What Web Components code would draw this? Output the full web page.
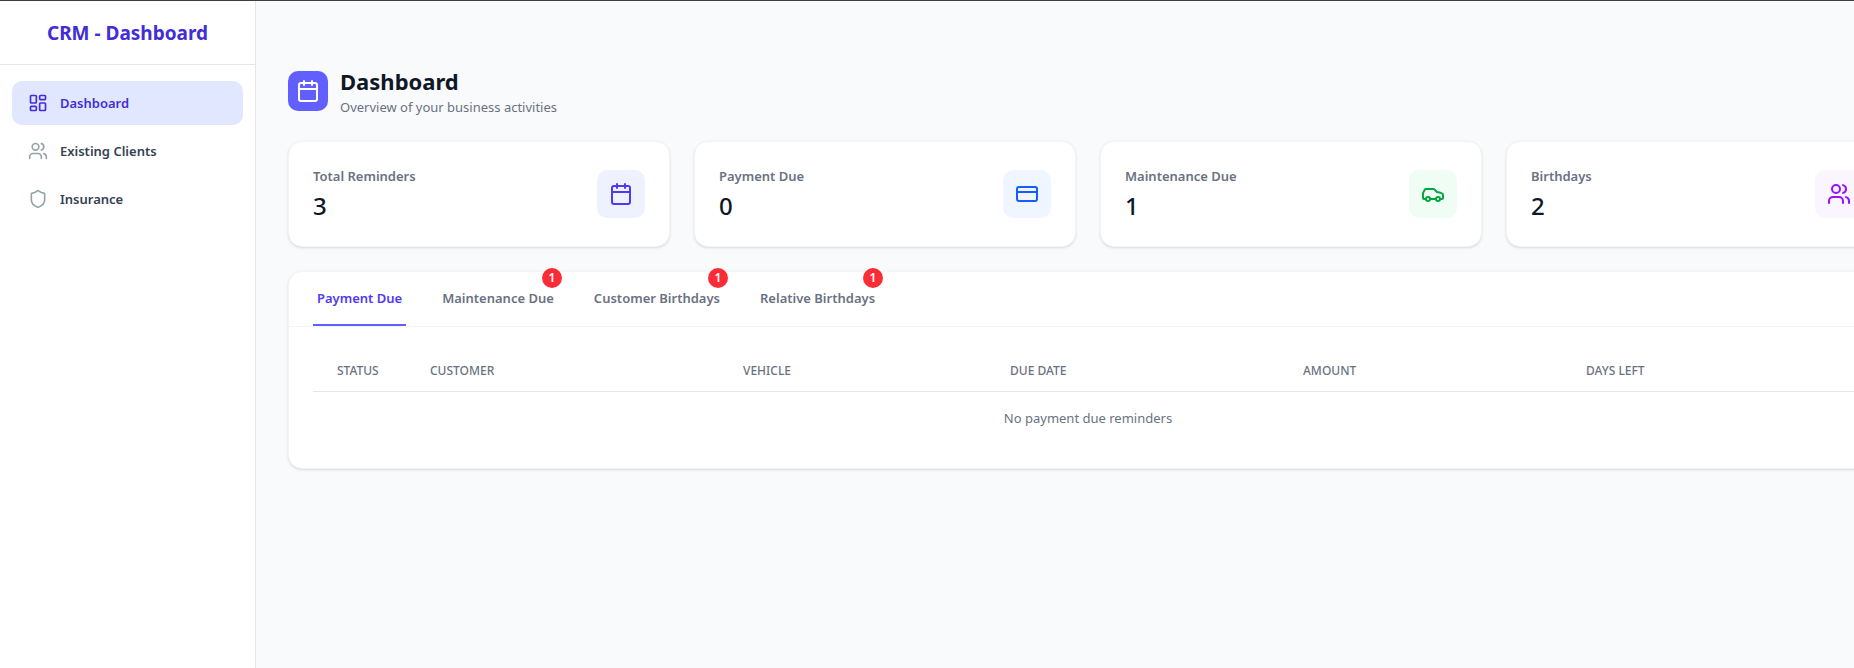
<!DOCTYPE html>
<html lang="en">
<head>
<meta charset="utf-8">
<meta name="viewport" content="width=device-width, initial-scale=1">
<title>CRM - Dashboard</title>
<style>
  body {
    margin: 0;
    font-family: "Noto Sans", "Open Sans", sans-serif;
    font-size: 13px;
    line-height: 20px;
    color: #101828;
    background: #f9fafb;
  }
</style>
</head>
<body>
<crm-app>
  <crm-sidebar slot="sidebar" heading="CRM - Dashboard">
    <crm-nav-item icon="dashboard" active>Dashboard</crm-nav-item>
    <crm-nav-item icon="users">Existing Clients</crm-nav-item>
    <crm-nav-item icon="shield">Insurance</crm-nav-item>
  </crm-sidebar>

  <crm-page-header icon="calendar" heading="Dashboard">Overview of your business activities</crm-page-header>

  <crm-stats>
    <crm-stat-card icon="calendar" value="3" color="indigo">Total Reminders</crm-stat-card>
    <crm-stat-card icon="card" value="0" color="blue">Payment Due</crm-stat-card>
    <crm-stat-card icon="car" value="1" color="green">Maintenance Due</crm-stat-card>
    <crm-stat-card icon="users" value="2" color="purple">Birthdays</crm-stat-card>
  </crm-stats>

  <crm-panel>
    <crm-tab slot="tabs" active>Payment Due</crm-tab>
    <crm-tab slot="tabs" count="1">Maintenance Due</crm-tab>
    <crm-tab slot="tabs" count="1">Customer Birthdays</crm-tab>
    <crm-tab slot="tabs" count="1">Relative Birthdays</crm-tab>
    <crm-reminders empty="No payment due reminders"></crm-reminders>
  </crm-panel>
</crm-app>

<script>
const ICONS = {
  dashboard: `
    <rect x="3" y="3" width="7" height="9" rx="1"/>
    <rect x="14" y="3" width="7" height="5" rx="1"/>
    <rect x="14" y="12" width="7" height="9" rx="1"/>
    <rect x="3" y="16" width="7" height="5" rx="1"/>`,
  users: `
    <path d="M16 21v-2a4 4 0 0 0-4-4H6a4 4 0 0 0-4 4v2"/>
    <circle cx="9" cy="7" r="4"/>
    <path d="M22 21v-2a4 4 0 0 0-3-3.87"/>
    <path d="M16 3.13a4 4 0 0 1 0 7.75"/>`,
  shield: `
    <path d="M20 13c0 5-3.5 7.5-7.66 8.95a1 1 0 0 1-.67-.01C7.5 20.5 4 18 4 13V6a1 1 0 0 1 1-1c2 0 4.5-1.2 6.24-2.72a1.17 1.17 0 0 1 1.52 0C14.51 3.81 17 5 19 5a1 1 0 0 1 1 1z"/>`,
  calendar: `
    <path d="M8 2v4"/>
    <path d="M16 2v4"/>
    <rect x="3" y="4" width="18" height="18" rx="2"/>
    <path d="M3 10h18"/>`,
  card: `
    <rect x="2" y="5" width="20" height="14" rx="2"/>
    <path d="M2 10h20"/>`,
  car: `
    <path d="M19 17h2c.6 0 1-.4 1-1v-3c0-.9-.7-1.7-1.5-1.9C18.7 10.6 16 10 16 10s-1.3-1.4-2.2-2.3c-.5-.4-1.1-.7-1.8-.7H5c-.6 0-1.1.4-1.4.9l-1.4 2.9A3.7 3.7 0 0 0 2 12v4c0 .6.4 1 1 1h2"/>
    <circle cx="7" cy="17" r="2"/>
    <path d="M9 17h6"/>
    <circle cx="17" cy="17" r="2"/>`,
};

const COLORS = {
  indigo: ['#4f39f6', '#eef2ff'],
  blue: ['#155dfc', '#eff6ff'],
  green: ['#00a63e', '#f0fdf4'],
  purple: ['#9810fa', '#faf5ff'],
};

function render(element, html) {
  const shadow = element.attachShadow({ mode: 'open' });
  const template = document.createElement('template');
  template.innerHTML = html;
  shadow.appendChild(template.content.cloneNode(true));
}

class Icon extends HTMLElement {
  constructor() {
    super();
    render(this, `
      <style>
        :host {
          display: block;
          flex: none;
          width: 24px;
          height: 24px;
        }
        svg {
          display: block;
          width: 100%;
          height: 100%;
          fill: none;
          stroke: currentColor;
          stroke-width: 2;
          stroke-linecap: round;
          stroke-linejoin: round;
        }
      </style>
      <svg viewBox="0 0 24 24" aria-hidden="true">${ICONS[this.getAttribute('name')]}</svg>
    `);
  }
}

class App extends HTMLElement {
  constructor() {
    super();
    render(this, `
      <style>
        :host {
          display: flex;
          box-sizing: border-box;
          min-height: 100vh;
          border-top: 1px solid #3f3d45;
        }
        main {
          flex: 1;
          min-width: 0;
          box-sizing: border-box;
          padding: 64px 32px 32px;
          overflow: hidden;
        }
        /* four cards stay in one row, the rest runs off to the right */
        .content {
          display: flex;
          flex-direction: column;
          gap: 24px;
          min-width: 1600px;
        }
      </style>
      <slot name="sidebar"></slot>
      <main>
        <div class="content"><slot></slot></div>
      </main>
    `);
  }
}

class Sidebar extends HTMLElement {
  constructor() {
    super();
    render(this, `
      <style>
        :host {
          display: block;
          flex: none;
          box-sizing: border-box;
          width: 256px;
          background: #fff;
          border-right: 1px solid #e5e7eb;
        }
        header {
          display: flex;
          align-items: center;
          justify-content: center;
          box-sizing: border-box;
          height: 64px;
          border-bottom: 1px solid #e5e7eb;
        }
        h1 {
          margin: 0;
          font-size: 19px;
          font-weight: 700;
          line-height: 28px;
          color: #432dd7;
        }
        nav {
          display: flex;
          flex-direction: column;
          gap: 4px;
          padding: 16px 12px;
        }
      </style>
      <header><h1>${this.getAttribute('heading')}</h1></header>
      <nav><slot></slot></nav>
    `);
  }
}

class NavItem extends HTMLElement {
  constructor() {
    super();
    render(this, `
      <style>
        :host { display: block; }
        a {
          display: flex;
          align-items: center;
          gap: 12px;
          padding: 12px 16px;
          border-radius: 10px;
          color: #364153;
          font-weight: 600;
          text-decoration: none;
        }
        crm-icon {
          width: 20px;
          height: 20px;
          color: #95a5a6;
        }
        :host([active]) a { background: #e0e7ff; }
        :host([active]) a,
        :host([active]) crm-icon { color: #432dd7; }
      </style>
      <a href="#"><crm-icon name="${this.getAttribute('icon')}"></crm-icon><slot></slot></a>
    `);
  }
}

class PageHeader extends HTMLElement {
  constructor() {
    super();
    render(this, `
      <style>
        :host {
          display: flex;
          align-items: center;
          gap: 12px;
        }
        .badge {
          padding: 8px;
          border-radius: 10px;
          color: #fff;
          background: #615fff;
        }
        h2 {
          margin: 0;
          font-size: 22px;
          font-weight: 700;
          line-height: 32px;
        }
        p {
          margin: 0;
          color: #6a7282;
        }
      </style>
      <div class="badge"><crm-icon name="${this.getAttribute('icon')}"></crm-icon></div>
      <div>
        <h2>${this.getAttribute('heading')}</h2>
        <p><slot></slot></p>
      </div>
    `);
  }
}

class Stats extends HTMLElement {
  constructor() {
    super();
    render(this, `
      <style>
        :host {
          display: grid;
          grid-template-columns: repeat(4, 1fr);
          gap: 24px;
        }
      </style>
      <slot></slot>
    `);
  }
}

class StatCard extends HTMLElement {
  constructor() {
    super();
    const [color, background] = COLORS[this.getAttribute('color')];
    render(this, `
      <style>
        :host {
          display: flex;
          align-items: center;
          justify-content: space-between;
          padding: 24px;
          background: #fff;
          border: 1px solid #f3f4f6;
          border-radius: 14px;
          box-shadow: 0 1px 3px rgba(0, 0, 0, .1), 0 1px 2px -1px rgba(0, 0, 0, .1);
        }
        p { margin: 0; }
        .label {
          margin-bottom: 4px;
          font-weight: 600;
          color: #6a7282;
        }
        .value {
          font-size: 24px;
          font-weight: 500;
          line-height: 32px;
        }
        .icon {
          padding: 12px;
          border-radius: 10px;
          color: ${color};
          background: ${background};
        }
      </style>
      <div>
        <p class="label"><slot></slot></p>
        <p class="value">${this.getAttribute('value')}</p>
      </div>
      <div class="icon"><crm-icon name="${this.getAttribute('icon')}"></crm-icon></div>
    `);
  }
}

class Panel extends HTMLElement {
  constructor() {
    super();
    render(this, `
      <style>
        :host {
          display: block;
          background: #fff;
          border: 1px solid #f3f4f6;
          border-radius: 14px;
          box-shadow: 0 1px 3px rgba(0, 0, 0, .1), 0 1px 2px -1px rgba(0, 0, 0, .1);
        }
        .tabs {
          display: flex;
          gap: 32px;
          padding: 0 24px;
          border-bottom: 1px solid #f3f4f6;
        }
        .body { padding: 24px; }
      </style>
      <div class="tabs" role="tablist"><slot name="tabs"></slot></div>
      <div class="body"><slot></slot></div>
    `);
  }
}

class Tab extends HTMLElement {
  constructor() {
    super();
    const count = this.getAttribute('count');
    render(this, `
      <style>
        :host {
          display: block;
          position: relative;
        }
        button {
          display: block;
          padding: 16px 4px;
          border: 0;
          border-bottom: 2px solid transparent;
          background: none;
          color: #6a7282;
          font: inherit;
          font-weight: 600;
          cursor: pointer;
        }
        :host([active]) button {
          color: #4f39f6;
          border-color: #615fff;
        }
        .count {
          position: absolute;
          top: -4px;
          right: -4px;
          width: 20px;
          height: 20px;
          border-radius: 50%;
          background: #fb2c36;
          color: #fff;
          font-size: 12px;
          font-weight: 600;
          text-align: center;
        }
      </style>
      <button type="button" role="tab" aria-selected="${this.hasAttribute('active')}"><slot></slot></button>
      ${count ? `<span class="count">${count}</span>` : ''}
    `);
  }
}

class Reminders extends HTMLElement {
  constructor() {
    super();
    render(this, `
      <style>
        :host { display: block; }
        table {
          width: 100%;
          table-layout: fixed;
          border-collapse: separate;
          border-spacing: 0;
        }
        th {
          padding: 12px 24px;
          border-bottom: 1px solid #e5e7eb;
          font-size: 12px;
          font-weight: 500;
          line-height: 16px;
          text-align: left;
          text-transform: uppercase;
          white-space: nowrap;
          color: #6a7282;
        }
        td {
          padding: 16px 24px;
          text-align: center;
          color: #6a7282;
        }
        .status { width: 93px; }
        .customer { width: 313px; }
        .vehicle { width: 267px; }
        .date { width: 293px; }
        .amount { width: 283px; }
      </style>
      <table>
        <colgroup>
          <col class="status">
          <col class="customer">
          <col class="vehicle">
          <col class="date">
          <col class="amount">
          <col>
        </colgroup>
        <thead>
          <tr>
            <th>Status</th>
            <th>Customer</th>
            <th>Vehicle</th>
            <th>Due Date</th>
            <th>Amount</th>
            <th>Days Left</th>
          </tr>
        </thead>
        <tbody>
          <tr><td colspan="6">${this.getAttribute('empty')}</td></tr>
        </tbody>
      </table>
    `);
  }
}

customElements.define('crm-icon', Icon);
customElements.define('crm-app', App);
customElements.define('crm-sidebar', Sidebar);
customElements.define('crm-nav-item', NavItem);
customElements.define('crm-page-header', PageHeader);
customElements.define('crm-stats', Stats);
customElements.define('crm-stat-card', StatCard);
customElements.define('crm-panel', Panel);
customElements.define('crm-tab', Tab);
customElements.define('crm-reminders', Reminders);
</script>
</body>
</html>
